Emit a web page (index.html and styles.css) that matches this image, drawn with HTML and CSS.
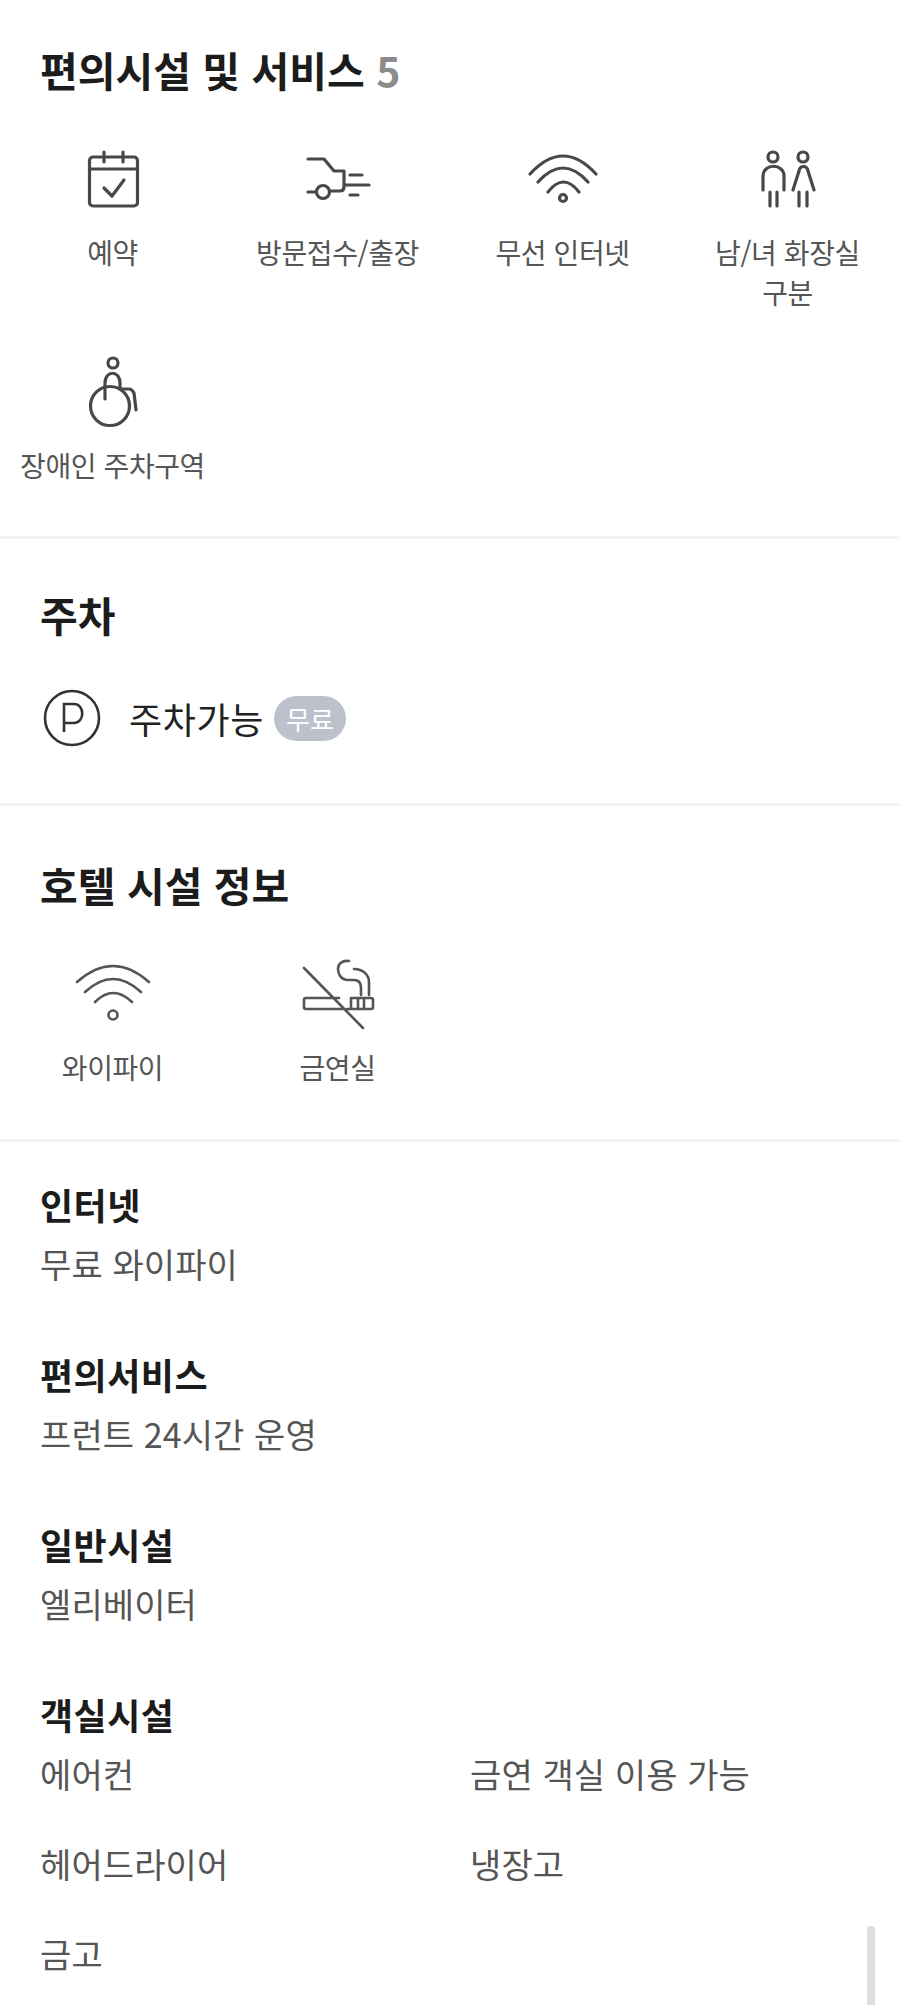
FILE: index.html
```html
<!DOCTYPE html>
<html lang="ko">
<head>
<meta charset="utf-8">
<title>편의시설 및 서비스</title>
<link rel="stylesheet" href="styles.css">
</head>
<body>
<div class="page">
  <section class="sec sec-amenity">
    <h2 class="title">편의시설 및 서비스 <span class="count">5</span></h2>
    <div class="grid">
      <div class="cell">
        <svg class="ico" viewBox="0 0 64 64"><path d="M12 12h41a3.500 3.500 0 0 1 3.500 3.500v42a3.500 3.500 0 0 1-3.500 3.500H12a3.500 3.500 0 0 1-3.500-3.500v-42A3.500 3.500 0 0 1 12 12zM8.500 24h48M23 7v10M42 7v10M23 43l8 8 12-16"/></svg>
        <div class="label">예약</div>
      </div>
      <div class="cell">
        <svg class="ico" viewBox="0 0 64 64"><path d="M2 14h16l10 12h10v16c0 2.500-1.500 4-4 4H25M2 47h8M44 30h12M40 40h23M44 50h8"/><circle cx="17" cy="47" r="6.500"/></svg>
        <div class="label">방문접수/출장</div>
      </div>
      <div class="cell">
        <svg class="ico" viewBox="0 0 64 64"><path d="M-1 29Q32-7 65 29M7 37Q32 9 57 37M17 47Q32.500 27 48 47"/><circle cx="32" cy="53" r="3.500"/></svg>
        <div class="label">무선 인터넷</div>
      </div>
      <div class="cell">
        <svg class="ico" viewBox="0 0 64 64"><circle cx="17" cy="12" r="5"/><circle cx="47" cy="12" r="5"/><path d="M7 45V31c0-13 21-13 21 0v14M14 47v14M21 47v14M37 45l6-19c1-6 8-6 9 0l6 19M43 47v14M51 47v14"/></svg>
        <div class="label">남/녀 화장실 구분</div>
      </div>
      <div class="cell">
        <svg class="ico ico-tall" viewBox="0 0 64 74"><circle cx="32" cy="6" r="5"/><circle cx="29" cy="49" r="19.500"/><path d="M24 42V26c0-13 15-13 15 0v6h9c3 0 4 2 5 4l2 17"/></svg>
        <div class="label">장애인 주차구역</div>
      </div>
    </div>
  </section>

  <section class="sec sec-parking">
    <h2 class="title">주차</h2>
    <div class="park">
      <svg class="p-ico" viewBox="0 0 58 58"><circle cx="29" cy="29" r="27"/><path d="M21 43V15h10c11 0 11 19 0 19H21"/></svg>
      <span class="park-text">주차가능</span>
      <span class="badge">무료</span>
    </div>
  </section>

  <section class="sec sec-hotel">
    <h2 class="title">호텔 시설 정보</h2>
    <div class="grid">
      <div class="cell">
        <svg class="ico ico-thin ico-wide" viewBox="0 0 76 64"><path d="M2 19Q38-13 74 19M10 29Q38 3 66 29M20 39Q38 21 57 39"/><circle cx="38" cy="52" r="4.500"/></svg>
        <div class="label">와이파이</div>
      </div>
      <div class="cell">
        <svg class="ico ico-thin ico-wide" viewBox="0 0 76 64"><path d="M4 5l59 60M39 35H6a2 2 0 0 0-2 2v7a2 2 0 0 0 2 2h37M51 35h20a2 2 0 0 1 2 2v7a2 2 0 0 1-2 2H47M51 35v11M58 35v11M64 35v11M49-2c-7-1-11 3-11 8s3 11 10 11h6c5 0 7 3 7 8v7M54 6c9 0 15 6 15 13v13"/></svg>
        <div class="label">금연실</div>
      </div>
    </div>
  </section>

  <section class="sec sec-detail">
    <div class="info">
      <h3 class="info-title">인터넷</h3>
      <div class="rows"><div class="row">무료 와이파이</div></div>
    </div>
    <div class="info">
      <h3 class="info-title">편의서비스</h3>
      <div class="rows"><div class="row">프런트 24시간 운영</div></div>
    </div>
    <div class="info">
      <h3 class="info-title">일반시설</h3>
      <div class="rows"><div class="row">엘리베이터</div></div>
    </div>
    <div class="info">
      <h3 class="info-title">객실시설</h3>
      <div class="rows rows-two">
        <div class="row">에어컨</div>
        <div class="row">금연 객실 이용 가능</div>
        <div class="row">헤어드라이어</div>
        <div class="row">냉장고</div>
        <div class="row">금고</div>
      </div>
    </div>
  </section>
</div>
<div class="scrollbar"></div>
</body>
</html>
```
FILE: styles.css
```css
* { box-sizing: border-box; }
html, body { margin: 0; padding: 0; background: #fff; }
body {
  width: 900px;
  height: 2005px;
  overflow: hidden;
  position: relative;
  font-family: "Noto Sans CJK KR", "Noto Sans", sans-serif;
  color: #1c1c1c;
}
.page { display: flex; flex-direction: column; }
.sec { border-bottom: 3px solid #f2f2f2; padding: 0 40px; }
.sec-amenity { height: 539px; padding-top: 43px; }
.sec-parking { height: 267px; padding-top: 49px; }
.sec-hotel { height: 336px; padding-top: 52px; }
.sec-detail { border-bottom: 0; padding-top: 32px; }
.title {
  margin: 0;
  font-size: 41px;
  line-height: 52px;
  font-weight: 700;
}
.count { color: #8c8c8c; font-weight: 700; }
.grid {
  display: grid;
  grid-template-columns: repeat(4, 225px);
  margin: 50px 0 0 -40px;
  row-gap: 45px;
}
.sec-hotel .grid { margin-top: 53px; }
.cell { display: flex; flex-direction: column; align-items: center; padding: 0 24px; }
.ico {
  width: 64px;
  height: 64px;
  fill: none;
  stroke: #484848;
  stroke-width: 3.2;
  stroke-linecap: round;
  stroke-linejoin: round;
  overflow: visible;
  flex: none;
}
.ico-tall { height: 74px; margin-bottom: -9px; }
.ico-wide { width: 76px; margin-bottom: -3px; }
.ico-thin { stroke: #555; stroke-width: 2.6; }
.label {
  margin-top: 23px;
  font-size: 28px;
  line-height: 40px;
  letter-spacing: -0.4px;
  color: #555;
  text-align: center;
  word-break: keep-all;
}
.ico-tall + .label { white-space: nowrap; }
.park { display: flex; align-items: center; margin: 48px 0 0 3px; height: 60px; }
.p-ico {
  width: 58px;
  height: 58px;
  margin-right: 28px;
  fill: none;
  stroke: #333;
  stroke-width: 2.6;
}
.park-text { font-size: 36px; letter-spacing: 0.6px; color: #222; }
.badge {
  margin-left: 10px;
  width: 72px;
  height: 45px;
  border-radius: 23px;
  background: #bcc1cc;
  color: #fff;
  font-size: 26px;
  display: flex;
  align-items: center;
  justify-content: center;
}
.info + .info { margin-top: 50px; }
.info-title {
  margin: 0;
  font-size: 36px;
  line-height: 60px;
  font-weight: 700;
  letter-spacing: 0.5px;
}
.rows { font-size: 34px; letter-spacing: 0.1px; color: #555; }
.rows-two { display: grid; grid-template-columns: 430px 1fr; row-gap: 30px; }
.row { line-height: 60px; }
.scrollbar {
  position: absolute;
  left: 867px;
  top: 1926px;
  width: 8px;
  height: 90px;
  border-radius: 4px;
  background: #dedede;
}
```
